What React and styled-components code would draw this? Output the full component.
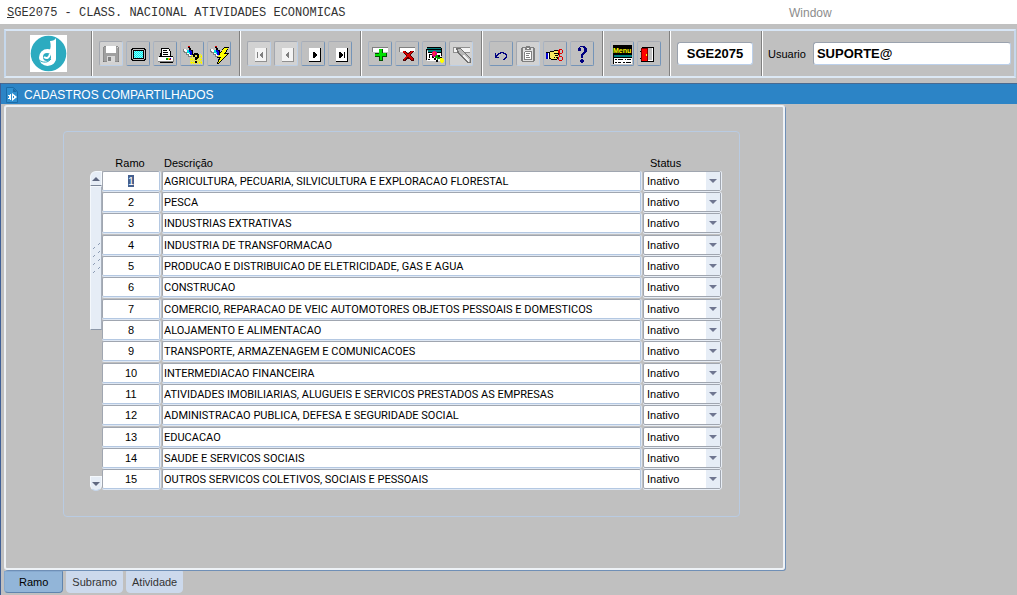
import React, { useEffect, useRef, useState } from 'react';
import styled, { createGlobalStyle } from 'styled-components';

const RAMOS = [
    'AGRICULTURA, PECUARIA, SILVICULTURA E EXPLORACAO FLORESTAL',
    'PESCA',
    'INDUSTRIAS EXTRATIVAS',
    'INDUSTRIA DE TRANSFORMACAO',
    'PRODUCAO E DISTRIBUICAO DE ELETRICIDADE, GAS E AGUA',
    'CONSTRUCAO',
    'COMERCIO, REPARACAO DE VEIC AUTOMOTORES OBJETOS PESSOAIS E DOMESTICOS',
    'ALOJAMENTO E ALIMENTACAO',
    'TRANSPORTE, ARMAZENAGEM E COMUNICACOES',
    'INTERMEDIACAO FINANCEIRA',
    'ATIVIDADES IMOBILIARIAS, ALUGUEIS E SERVICOS PRESTADOS AS EMPRESAS',
    'ADMINISTRACAO PUBLICA, DEFESA E SEGURIDADE SOCIAL',
    'EDUCACAO',
    'SAUDE E SERVICOS SOCIAIS',
    'OUTROS SERVICOS COLETIVOS, SOCIAIS E PESSOAIS',
];

const TABS = ['Ramo', 'Subramo', 'Atividade'];

const dots = (x0, y0, x1, y1, step = 2) => {
    let d = '';
    for (let y = y0; y < y1; y++) {
        for (let x = x0 + ((y - y0) % step); x < x1; x += step) d += `M${x} ${y}h1v1h-1z`;
    }
    return d;
};

// flashlight used by both query buttons
const Torch = () => (
    <>
        <path fill="#808080" d="M1 5h1v2h1v1h2v2h2v2h3v1h-4v-2h-2v-2h-2v-1h-1z" />
        <path fill="#fff" d="M2 5h2v1h2v2h1v2h2v2h-2v-2h-2v-2h-2v-1h-1z" />
        <path fill="#00e0e0" d="M5 6h2v1h1v3h-1v-1h-2z" />
        <path fill="#0000e0" d="M7 6h3v5h-2v-3h-1z" />
        <path fill="#000" d="M6 3h2v1h1v2h2v5h-1v-4h-1v-1h-2v-2h-1z" />
        <path fill="#e00000" d="M6 2h2v1h-2z" />
    </>
);

const NavBox = ({ disabled, children }) => (
    <>
        <path fill={disabled ? '#f4f4f4' : '#fff'} d="M6 4h11v13h-11z" />
        <path fill={disabled ? '#909090' : '#000'} d="M17 4h1v14h-12v-1h11z" />
        <g fill={disabled ? '#808080' : '#000'}>{children}</g>
    </>
);

const ICONS = {
    save: (
        <>
            <path fill="#8c8c8c" d="M2 3h1v-1h14v1h1v14h-1v1h-14v-1h-1z" />
            <path fill="#a0a0a0" d="M3 3h14v14h-14z" />
            <path fill="#fff" d="M5 2h10v7h-10z" />
            <path fill="#d8d8d8" d="M6 12h8v6h-8zM16 3h1v1h-1z" />
            <path fill="#808080" d="M7 13h3v4h-3z" />
            <path fill="#707070" d="M2 17h1v1h-1zM17 17h1v1h-1z" />
        </>
    ),
    screen: (
        <>
            <path fill="#000" d="M4 4h13v1h1v11h-1v1h-13v-1h-1v-11h1z" />
            <path fill="#c0c0c0" d="M5 5h11v1h1v9h-1v1h-11v-1h-1v-9h1z" />
            <path fill="#000" d="M5 6h11v9h-11z" />
            <path fill="#00f0f0" d="M6 7h9v7h-9z" />
            <path fill="#90f8f8" d={dots(6, 7, 15, 14)} />
        </>
    ),
    print: (
        <>
            <path fill="#000" d="M6 4h8v1h1v2h1v5h-11v-3h1z" />
            <path fill="#fff" d="M7 5h7v2h1v5h-8z" />
            <path fill="#000" d="M8 6h4v1h-4zM8 8h5v1h-5zM8 10h5v1h-5z" />
            <path fill="#fff" d="M4 12h14v5h-15v-4h1z" />
            <path fill="#000" d="M4 12h14v1h-14z" />
            <path fill="#808080" d="M18 13h1v5h-16v-1h15z" />
            <path fill="#000" d="M5 18h13v1h-13z" />
            <path fill="#00a000" d="M11 14h2v2h-2z" />
            <path fill="#e0d000" d="M13 14h2v2h-2z" />
            <path fill="#e00000" d="M14 15h2v1h-2z" />
            <path fill="#0000e0" d="M15 14h1v1h-1z" />
        </>
    ),
    queryEnter: (
        <>
            <path fill="#ffff00" d={dots(8, 10, 20, 20)} />
            <path fill="#f4f400" d="M8 12h2v1h-2zM8 15h3v1h-3zM9 18h3v1h-3zM17 12h3v1h-3zM17 15h3v1h-3zM17 18h3v1h-3z" />
            <Torch />
            <path fill="#000" d="M12 9h4v1h1v4h-1v1h-1v1h-2v-3h2v-2h-2v2h-2v-3h1zM13 17h2v2h-2z" />
        </>
    ),
    queryRun: (
        <>
            <Torch />
            <path fill="#000" d="M15 3h5l-3 6h3l-10 11h-2l2-6h-2z" />
            <path fill="#ffff00" d="M15 4h4l-4 6h3l-9 9 3-6h-3z" />
        </>
    ),
    first: <NavBox disabled><path d="M8 8h1v6h-1zM13 8h1v6h-1v-1h-1v-1h-1v-2h1v-1h1z" /></NavBox>,
    prev: <NavBox disabled><path d="M12 8h1v6h-1v-1h-1v-1h-1v-2h1v-1h1z" /></NavBox>,
    next: <NavBox><path d="M10 8h2v1h1v1h1v2h-1v1h-1v1h-2z" /></NavBox>,
    last: <NavBox><path d="M9 8h2v1h1v1h1v2h-1v1h-1v1h-2zM14 8h1v6h-1z" /></NavBox>,
    insert: (
        <>
            <path fill="#808080" d="M2 3h16v5h-16z" />
            <path fill="#fff" d="M3 4h15v4h-15z" />
            <path fill="#005000" d="M9 5h4v4h4v4h-4v4h-4v-4h-4v-4h4z" />
            <path fill="#00e000" d="M9 5h3v4h4v3h-4v4h-2v-4h-5v-2h4z" />
        </>
    ),
    remove: (
        <>
            <path fill="#808080" d="M2 3h16v5h-16z" />
            <path fill="#fff" d="M3 4h15v4h-15z" />
            <path fill="#500000" d="M6 7h3v1h1v1h2v-1h1v-1h4v1h-1v1h-1v1h-1v2h1v1h1v1h1v3h-3v-1h-1v-1h-3v1h-1v1h-3v-2h1v-1h1v-1h1v-2h-1v-1h-1v-1h-1z" />
            <path fill="#d80000" d="M6 7h2v1h1v1h1v1h2v-1h1v-1h1v-1h2v1h-1v1h-1v1h-1v2h1v1h1v1h1v2h-2v-1h-1v-1h-1v-1h-2v1h-1v1h-1v1h-1v-2h1v-1h1v-1h1v-1h-1v-1h-1v-1h-2z" />
        </>
    ),
    lock: (
        <>
            <path fill="#fff" d="M3 7h14v10h-14z" />
            <path fill="#000" d="M3 3h14v1h-14zM2 5h15v1h-15zM4 8h13v1h-13zM2 6h1v10h-1zM17 4h1v8h-1z" />
            <path fill="#008080" d="M3 4h14v1h-14zM4 6h13v2h-13z" />
            <path fill="#000" d="M5 10h3v1h-2v3h-1zM4 15h2v1h-2zM8 12h2v2h2v2h2v2h-2v-2h-2v-2h-2zM14 11h2v2h2v2h-2v-2h-2z" />
            <path fill="#e0007a" d="M9 7h3v1h1v4h-1v1h-3v-1h-1v-4h1z" />
            <path fill="#ff3030" d="M9 8h2v3h-2z" />
            <path fill="#00a000" d="M12 11h2v2h2v2h-2v1h-1v-2h-2v-2h1z" />
            <path fill="#ffff00" d="M16 14h3v1h1v3h-1v1h-2v-1h-1z" />
        </>
    ),
    torchOff: (
        <>
            <path fill="#909090" d="M2 3h17v6h-17z" />
            <path fill="#f4f4f4" d="M3 4h16v4h-16z" />
            <path fill="#707070" d="M5 4h4l11 11v4h-4l-9-9z" />
            <path fill="#b8b8b8" d="M7 5h2l10 10v3h-2l-9-9z" />
            <path fill="#f0f0f0" d="M12 11h1l5 5v2h-1l-5-5z" />
        </>
    ),
    undo: (
        <path fill="#000080" d="M4 9h1v2h1v-1h1v-1h2v-1h4v1h2v1h1v4h-1v1h-1v1h-2v-1h1v-1h1v-1h1v-2h-1v-1h-2v-1h-2v1h-2v1h-1v1h-1v1h2v1h-4z" />
    ),
    paste: (
        <>
            <path fill="#808080" d="M4 3h4v-1h4v1h4v1h1v13h-1v1h-12v-1h-1v-13h1z" />
            <path fill="#e0e0e0" d="M5 4h10v13h-10z" />
            <path fill="#808080" d="M7 3h6v3h-6zM7 7h7v9h-8v-8h1z" />
            <path fill="#fff" d="M9 4h2v1h-2zM7 8h6v7h-6z" />
            <path fill="#808080" d="M8 9h4v1h-4zM8 11h3v1h-3zM8 13h4v1h-4z" />
        </>
    ),
    cut: (
        <>
            <path fill="#000" d="M1 8h4v-1h4v-1h5v1h1v3h-1v1h-1v4h-1v1h-6v-1h-5z" />
            <path fill="#0000d0" d="M1 9h2v6h-2z" />
            <path fill="#fff" d="M3 9h1v6h-1z" />
            <path fill="#f8e860" d="M5 8h4v-1h4v2h-3v1h3v1h-2v1h2v1h-2v1h1v1h-6v-1h-1z" />
            <path fill="#000" d="M9 9h1v1h-1zM10 11h1v1h-1zM9 13h1v1h-1z" />
            <path fill="#e00000" d="M14 5h3v1h1v3h-1v1h-2v2h2v1h1v3h-1v1h-3v-1h-1v-3h1v-4h-1v-3h1zM15 6v3h2v-3zM14 13v3h3v-3z" fillRule="evenodd" />
        </>
    ),
    help: (
        <path fill="#000080" d="M6 3h2v-1h5v1h1v1h1v4h-1v1h-1v1h-1v1h-1v3h-2v-4h1v-1h1v-1h1v-4h-1v-1h-3v1h1v3h-3v-3h1zM9 15h2v1h1v2h-1v1h-2v-1h-1v-2h1z" />
    ),
    menu: (
        <>
            <path fill="#000" d="M1 1h19v10h-19z" />
            <path fill="#fff" d="M1 11h19v9h-19z" />
            <path fill="#008080" d="M1 11h19v2h-19z" />
            <path fill="#000" d="M1 13h19v1h-19zM1 11h1v9h-1zM3 15h2v1h-2zM6 15h5v1h-5zM13 15h1v1h-1zM15 15h4v1h-4zM3 18h2v1h-2zM6 18h3v1h-3zM11 18h2v1h-2zM14 18h5v1h-5z" />
            <text x="1" y="9" fill="#ffff00" fontFamily="Liberation Sans, Arial, sans-serif" fontSize="7" fontWeight="700">Menu</text>
        </>
    ),
    exit: (
        <>
            <path fill="#fff" d="M3 3h12v15h-12z" />
            <path fill="#000" d="M2 3h13v15h-3v-1h2v-13h-11v-1z" />
            <path fill="#c0c0c0" d="M9 4h4v12h-4z" />
            <path fill="#800000" d="M2 4h7v14h-7z" />
            <path fill="#ff0000" d="M3 5h5v12h-5z" />
            <path fill="#ffff00" d="M7 10h1v2h-1z" />
            <path fill="#000" d="M1 7h1v1h-1zM1 14h1v1h-1zM2 17h12v1h-12z" />
        </>
    ),
};

const TOOL_GROUPS = [
    [
        ['save', 'Salvar', true],
        ['screen', 'Limpar tela'],
        ['print', 'Imprimir'],
        ['queryEnter', 'Entrar consulta'],
        ['queryRun', 'Executar consulta'],
    ],
    [
        ['first', 'Primeiro', true],
        ['prev', 'Anterior', true],
        ['next', 'Próximo'],
        ['last', 'Último'],
    ],
    [
        ['insert', 'Inserir'],
        ['remove', 'Remover'],
        ['lock', 'Bloquear'],
        ['torchOff', 'Cancelar consulta', true],
    ],
    [
        ['undo', 'Desfazer'],
        ['paste', 'Colar', true],
        ['cut', 'Recortar'],
        ['help', 'Ajuda'],
    ],
    [
        ['menu', 'Menu'],
        ['exit', 'Sair'],
    ],
];

function Toolbar() {
    return (
        <Bar>
            <LogoCell>
                <Logo viewBox="0 0 37 37" role="img" aria-label="Logo">
                    <path fill="#fff" d="M0 0h37v37h-37z" />
                    <circle cx="18.500" cy="18.500" r="17.800" fill="#2cabc0" />
                    <circle cx="17.500" cy="22.500" r="8.500" fill="#fff" />
                    <path fill="#fff" d="M20 6c3 0 5-1 6-3v20c0 3-2 6-5 7l-2-14c2-2 2-6 1-10z" />
                    <circle cx="17" cy="22" r="4" fill="#2cabc0" />
                    <path fill="none" stroke="#fff" strokeWidth="2" d="M14 22c3 2 5 1 6-3" />
                    <path fill="none" stroke="#2cabc0" strokeWidth="1" d="M9 25c4 3 9 3 12-1" />
                </Logo>
            </LogoCell>
            {TOOL_GROUPS.map((group, i) => (
                <Group key={i}>
                    {group.map(([name, label, disabled]) => (
                        <ToolButton key={name} type="button" title={label} aria-label={label} disabled={disabled}>
                            <svg width="20" height="20" viewBox="0 0 20 20" shapeRendering="crispEdges">{ICONS[name]}</svg>
                        </ToolButton>
                    ))}
                </Group>
            ))}
            <Group>
                <CodeInput aria-label="Programa" defaultValue="SGE2075" />
            </Group>
            <UserGroup>
                <label htmlFor="usuario">Usuario</label>
                <BarInput id="usuario" defaultValue="SUPORTE@" />
            </UserGroup>
        </Bar>
    );
}

function RamoTable() {
    const firstRef = useRef(null);

    useEffect(() => {
        firstRef.current.focus();
        firstRef.current.select();
    }, []);

    return (
        <Frame>
            <ScrollBar>
                <ScrollButton type="button" aria-label="Subir">
                    <svg width="8" height="4" viewBox="0 0 8 4"><path fill="#5f6880" d="M4 0l4 4h-8z" /></svg>
                </ScrollButton>
                <Thumb>
                    <svg width="9" height="32" viewBox="0 0 9 32">
                        <path stroke="#8d9db5" fill="none" d="M6 3l2-2M1 7l2-2M6 11l2-2M1 15l2-2M6 19l2-2M1 23l2-2M6 27l2-2M1 31l2-2" />
                    </svg>
                </Thumb>
                <ScrollButton type="button" aria-label="Descer" $down>
                    <svg width="8" height="4" viewBox="0 0 8 4"><path fill="#5f6880" d="M0 0h8l-4 4z" /></svg>
                </ScrollButton>
            </ScrollBar>
            <Table>
                <colgroup>
                    <col width="60" />
                    <col />
                    <col width="78" />
                </colgroup>
                <thead>
                    <tr>
                        <HeadCell $center>Ramo</HeadCell>
                        <HeadCell>Descrição</HeadCell>
                        <HeadCell $indent>Status</HeadCell>
                    </tr>
                </thead>
                <tbody>
                    {RAMOS.map((descricao, i) => (
                        <Row key={descricao}>
                            <td>
                                <CellInput ref={i === 0 ? firstRef : null} $center aria-label={`Ramo ${i + 1}`} defaultValue={i + 1} />
                            </td>
                            <td>
                                <DescInput aria-label={`Descrição ${i + 1}`} defaultValue={descricao} />
                            </td>
                            <td>
                                <StatusBox>
                                    <select aria-label={`Status ${i + 1}`} defaultValue="Inativo">
                                        <option>Inativo</option>
                                        <option>Ativo</option>
                                    </select>
                                    <Arrow>
                                        <svg width="8" height="4" viewBox="0 0 8 4"><path fill="#6f7690" d="M0 0h8l-4 4z" /></svg>
                                    </Arrow>
                                </StatusBox>
                            </td>
                        </Row>
                    ))}
                </tbody>
            </Table>
        </Frame>
    );
}

export default function App() {
    const [tab, setTab] = useState('Ramo');

    return (
        <Page>
            <GlobalStyle />
            <MenuBar>
                <ProgramTitle><u>S</u>GE2075 - CLASS. NACIONAL ATIVIDADES ECONOMICAS</ProgramTitle>
                <WindowMenu type="button">Window</WindowMenu>
            </MenuBar>
            <Toolbar />
            <WindowArea>
                <WindowTitle>
                    <svg width="12" height="16" viewBox="0 0 12 16">
                        <path fill="#2f8fd0" stroke="#1c6ca8" d="M0.500 0.500h7l4 4v11h-11z" />
                        <path fill="#1c6ca8" d="M7 1v4h4z" />
                        <path fill="#fff" d="M6 6l5 4-5 4zM5 7v6h-1v-1h-2v-1h1v-2h-1v-1h2v-1z" />
                        <path fill="#2f8fd0" d="M7 9h1v2h-1z" />
                    </svg>
                    CADASTROS COMPARTILHADOS
                </WindowTitle>
                <Panel>
                    <RamoTable />
                </Panel>
                <TabList role="tablist">
                    {TABS.map((name) => (
                        <Tab key={name} type="button" role="tab" aria-selected={tab === name} $active={tab === name} onClick={() => setTab(name)}>
                            {name}
                        </Tab>
                    ))}
                </TabList>
            </WindowArea>
        </Page>
    );
}

const GlobalStyle = createGlobalStyle`
  * {
    box-sizing: border-box;
  }

  body {
    margin: 0;
    background: #c0c0c0;
  }

  body, button, input, select {
    font-family: "Liberation Sans", Arial, sans-serif;
    font-size: 11px;
    color: #000;
  }

  ::selection {
    background: #45608f;
    color: #fff;
  }
`;

const Page = styled.div`
  min-height: 100vh;
  display: flex;
  flex-direction: column;
`;

const MenuBar = styled.header`
  height: 24px;
  display: grid;
  grid-template-columns: 782px 1fr;
  align-items: center;
  padding: 0 7px;
  background: #fff;
`;

const ProgramTitle = styled.h1`
  margin: 0;
  padding-top: 2px;
  font: 12px "Liberation Mono", "Courier New", monospace;
  color: #333;
`;

const WindowMenu = styled.button`
  justify-self: start;
  padding: 2px 0 0;
  border: none;
  background: none;
  font-size: 12px;
  color: #8c8c8c;
`;

/* Toolbar */
const Bar = styled.div`
  display: flex;
  height: 49px;
  margin: 5px 1px 5px 4px;
  border: 2px solid #c6d8ec;
  border-top-color: #d8e6f6;
  border-bottom-color: #dce8f4;
`;

const Group = styled.div`
  display: flex;
  align-items: center;
  gap: 3px;
  padding: 0 8px 0 7px;
  border-left: 1px solid #808080;
  box-shadow: inset 1px 0 #fff;
`;

const LogoCell = styled.div`
  width: 85px;
  display: flex;
  align-items: center;
  justify-content: center;
`;

const Logo = styled.svg`
  width: 37px;
  height: 37px;
`;

const ToolButton = styled.button`
  width: 24px;
  height: 25px;
  display: flex;
  align-items: center;
  justify-content: center;
  padding: 0;
  border: 1px solid;
  border-color: ${(p) => (p.disabled ? '#a4a8b0 #bccfe6 #bccfe6 #a4a8b0' : '#a8acb4 #7494b8 #7494b8 #a8b4c4')};
  border-radius: 2px;
  background: ${(p) => (p.disabled ? '#d2d2d2' : '#c0c0c0')};
`;

const BarInput = styled.input`
  flex: 1;
  min-width: 0;
  height: 23px;
  padding: 0 3px;
  border: 1px solid;
  border-color: #9aa2ae #bcd0ea #bcd0ea #9aa2ae;
  border-radius: 3px;
  background: #fff;
  font-size: 13px;
  font-weight: 700;
  outline: none;
`;

const CodeInput = styled(BarInput)`
  flex: none;
  width: 76px;
  text-align: center;
`;

const UserGroup = styled(Group)`
  flex: 1;
  gap: 7px;
  padding: 0 3px 0 6px;
`;

/* Window */
const WindowArea = styled.main`
  flex: 1;
  display: flex;
  flex-direction: column;
  padding-bottom: 2px;
  border-left: 1px solid #3f5f96;
`;

const WindowTitle = styled.h2`
  display: flex;
  align-items: center;
  gap: 6px;
  height: 21px;
  margin: 0;
  padding: 2px 0 0 5px;
  border-top: 1px solid #4a6a90;
  background: #2c84c6;
  font-size: 12px;
  font-weight: 400;
  color: #fff;
`;

const Panel = styled.section`
  flex: 1;
  max-width: 781px;
  margin: 1px 0 0 3px;
  padding: 24px 43px 24px 57px;
  border: 2px solid #eef2f6;
  border-radius: 3px;
  box-shadow: 1px 1px #6f8fb6;
`;

const Frame = styled.div`
  display: flex;
  padding: 19px 18px 25px 26px;
  border: 1px solid #b9cbe2;
  border-radius: 4px;
`;

const ScrollBar = styled.div`
  width: 12px;
  display: flex;
  flex-direction: column;
  margin-top: 20px;
`;

const ScrollButton = styled.button`
  width: 12px;
  height: 15px;
  display: flex;
  align-items: center;
  justify-content: center;
  margin-top: ${(p) => (p.$down ? 'auto' : 0)};
  padding: 0;
  border: 1px solid #f4f8fc;
  border-bottom-color: ${(p) => (p.$down ? '#c4d6ec' : '#7a8598')};
  border-radius: ${(p) => (p.$down ? '0 0 6px 6px' : '6px 0 0 0')};
  background: #e6edf6;
`;

const Thumb = styled.div`
  height: 144px;
  display: flex;
  align-items: center;
  justify-content: center;
  border: 1px solid #f4f8fc;
  border-right-color: #a8b0bc;
  border-bottom-color: #8d98a8;
  background: #e6edf6;
`;

const Table = styled.table`
  flex: 1;
  min-width: 0;
  table-layout: fixed;
  border-collapse: collapse;

  td {
    padding: 0 2px 1px 0;
    vertical-align: top;
  }

  td:last-child {
    padding-right: 0;
  }
`;

const HeadCell = styled.th`
  height: 20px;
  padding: 3px ${(p) => (p.$center ? '6px' : '2px')} 0 ${(p) => (p.$indent ? '7px' : '2px')};
  font-weight: 400;
  text-align: ${(p) => (p.$center ? 'center' : 'left')};
`;

const Row = styled.tr`
  height: 21px;

  &:nth-child(3n) {
    height: 22px;
  }
`;

const CellInput = styled.input`
  display: block;
  width: 100%;
  height: 20px;
  padding: 0 1px;
  border: 1px solid;
  border-color: #a0a6b0 #b4c8e2 #b4c8e2 #a0a6b0;
  border-radius: 2px;
  background: #fff;
  box-shadow: 0 1px #dfe8f4, 1px 0 #dfe8f4;
  text-align: ${(p) => (p.$center ? 'center' : 'left')};
  outline: none;
`;

const DescInput = styled(CellInput)`
  font-family: Roboto, "Liberation Sans", sans-serif;
`;

const StatusBox = styled.div`
  display: grid;
  grid-template-columns: 1fr 14px;
  height: 20px;
  border: 1px solid #a0a6b0;
  border-radius: 2px;
  background: #fff;
  box-shadow: 0 1px #e8eef6, 1px 0 #e8eef6;

  select {
    grid-area: 1 / 1 / 2 / 3;
    padding: 0 0 0 3px;
    border: none;
    background: transparent;
    appearance: none;
    outline: none;
  }
`;

const Arrow = styled.span`
  grid-area: 1 / 2;
  display: flex;
  align-items: center;
  justify-content: center;
  background: #e6edf6;
  pointer-events: none;
`;

/* Tabs */
const TabList = styled.div`
  display: flex;
  gap: 3px;
  height: 22px;
  margin: 1px 0 0 3px;
`;

const Tab = styled.button`
  padding: 0 ${(p) => (p.$active ? '14px' : '5px')};
  border: 1px solid;
  border-color: ${(p) => (p.$active ? '#86a9cf #5f84ae #5f84ae #86a9cf' : '#ccd9ec')};
  border-radius: 0 0 4px 4px;
  background: ${(p) => (p.$active ? '#92b5d8' : '#ccd9ec')};
  color: ${(p) => (p.$active ? '#000' : '#333')};
`;
